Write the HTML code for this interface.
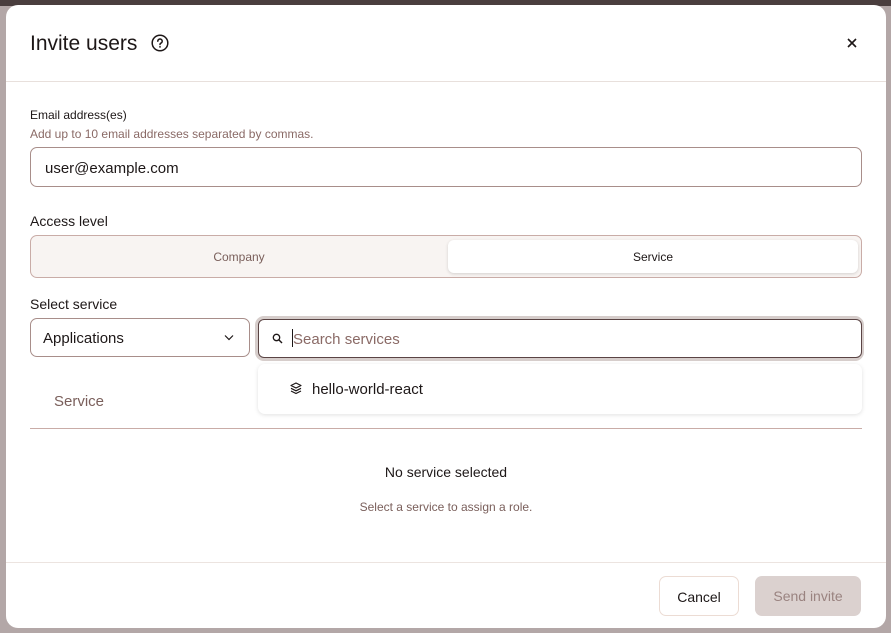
<!DOCTYPE html>
<html><head><style>
*{box-sizing:border-box;margin:0;padding:0}
body{width:891px;height:633px;overflow:hidden;background:#b3a7a7;font-family:"Liberation Sans",sans-serif;position:relative;color:#1d1717}
.top{position:absolute;left:0;top:0;width:891px;height:6px;background:#4a3e3e}
.modal{position:absolute;left:6px;top:5px;width:880px;height:623px;background:#fff;border-radius:12px;overflow:hidden}
.abs{position:absolute}
.lbl{font-size:14px;color:#1d1717}
</style></head><body>
<div class="top"></div>
<div class="modal">
<div class="abs" style="left:24px;top:27px;font-size:21px">Invite users</div>
<svg class="abs" style="left:145px;top:29px" width="18" height="18" viewBox="0 0 18 18"><circle cx="9" cy="9" r="7.8" fill="none" stroke="#1d1717" stroke-width="1.5"/><path d="M6.8 7.2a2.2 2.2 0 1 1 3 2c-.6.3-.8.7-.8 1.3" fill="none" stroke="#1d1717" stroke-width="1.5" stroke-linecap="round"/><circle cx="9" cy="12.9" r=".9" fill="#1d1717"/></svg>
<svg class="abs" style="left:841px;top:33px" width="10" height="10" viewBox="0 0 10 10"><path d="M1 1L9 9M9 1L1 9" stroke="#1d1717" stroke-width="1.6"/></svg>
<div class="abs" style="left:0;top:76px;width:880px;height:1px;background:#e8e0dc"></div>
<div class="abs" style="left:24px;top:103px;font-size:12px">Email address(es)</div>
<div class="abs" style="left:24px;top:122px;font-size:12px;color:#8a6a66">Add up to 10 email addresses separated by commas.</div>
<div class="abs" style="left:24px;top:142px;width:832px;height:40px;border:1px solid #a88e8a;border-radius:7px;padding:12px 14px;font-size:15px">user@example.com</div>
<div class="abs lbl" style="left:24px;top:208px">Access level</div>
<div class="abs" style="left:24px;top:230px;width:832px;height:43px;border:1px solid #c9aca7;border-radius:7px;background:#f8f4f2"></div>
<div class="abs" style="left:24px;top:245px;width:418px;text-align:center;font-size:12px;color:#7a5f5b">Company</div>
<div class="abs" style="left:442px;top:235px;width:410px;height:33px;background:#fff;border-radius:6px;box-shadow:0 1px 3px rgba(0,0,0,.15);text-align:center;font-size:12px;padding-top:10px">Service</div>
<div class="abs lbl" style="left:24px;top:291px">Select service</div>
<div class="abs" style="left:24px;top:313px;width:220px;height:39px;border:1px solid #a88e8a;border-radius:7px;padding:11px 12px;font-size:15px">Applications</div>
<svg class="abs" style="left:218px;top:329px" width="10" height="7" viewBox="0 0 10 7"><path d="M1 1.5l4 4 4-4" fill="none" stroke="#1d1717" stroke-width="1.2"/></svg>
<div class="abs" style="left:249px;top:311px;width:609px;height:45px;border:3px solid #d6cdcb;border-radius:9px"></div>
<div class="abs" style="left:252px;top:314px;width:604px;height:39px;border:1px solid #5a4444;border-radius:6px;background:#fff"></div>
<svg class="abs" style="left:266px;top:328px" width="11" height="11" viewBox="0 0 11 11"><circle cx="4.5" cy="4.5" r="3.2" fill="none" stroke="#1d1717" stroke-width="1.3"/><path d="M7 7l3 3" stroke="#1d1717" stroke-width="1.4"/></svg>
<div class="abs" style="left:286px;top:324px;width:1px;height:18px;background:#1d1717"></div>
<div class="abs" style="left:287px;top:326px;font-size:15px;color:#8a6a66">Search services</div>
<div class="abs" style="top:388px;font-size:15px;color:#7a5f5b;left:48px">Service</div>
<div class="abs" style="left:24px;top:423px;width:832px;height:1px;background:#c9aca7"></div>
<div class="abs" style="left:252px;top:359px;width:604px;height:50px;background:#fff;border-radius:7px;box-shadow:0 1px 4px rgba(0,0,0,.12)"></div>
<svg class="abs" style="left:284px;top:377px" width="12" height="13" viewBox="0 0 12 13"><path d="M6 1L11 3.5 6 6 1 3.5Z M1 6.3L6 8.8 11 6.3 M1 9L6 11.5 11 9" fill="none" stroke="#1d1717" stroke-width="1.2" stroke-linejoin="round"/></svg>
<div class="abs" style="left:306px;top:376px;font-size:15px">hello-world-react</div>
<div class="abs" style="left:0;top:459px;width:880px;text-align:center;font-size:14px;font-weight:500">No service selected</div>
<div class="abs" style="left:0;top:495px;width:880px;text-align:center;font-size:12px;color:#7a5f5b">Select a service to assign a role.</div>
<div class="abs" style="left:0;top:557px;width:880px;height:1px;background:#ece4e0"></div>
<div class="abs" style="left:653px;top:571px;width:80px;height:40px;border:1px solid #ecdcd4;border-radius:7px;text-align:center;font-size:14px;padding-top:12px;font-weight:500">Cancel</div>
<div class="abs" style="left:749px;top:571px;width:106px;height:40px;background:#dbd1cf;border-radius:7px;text-align:center;font-size:14px;padding-top:12px;color:#9a8380">Send invite</div>
</div>
</body></html>
